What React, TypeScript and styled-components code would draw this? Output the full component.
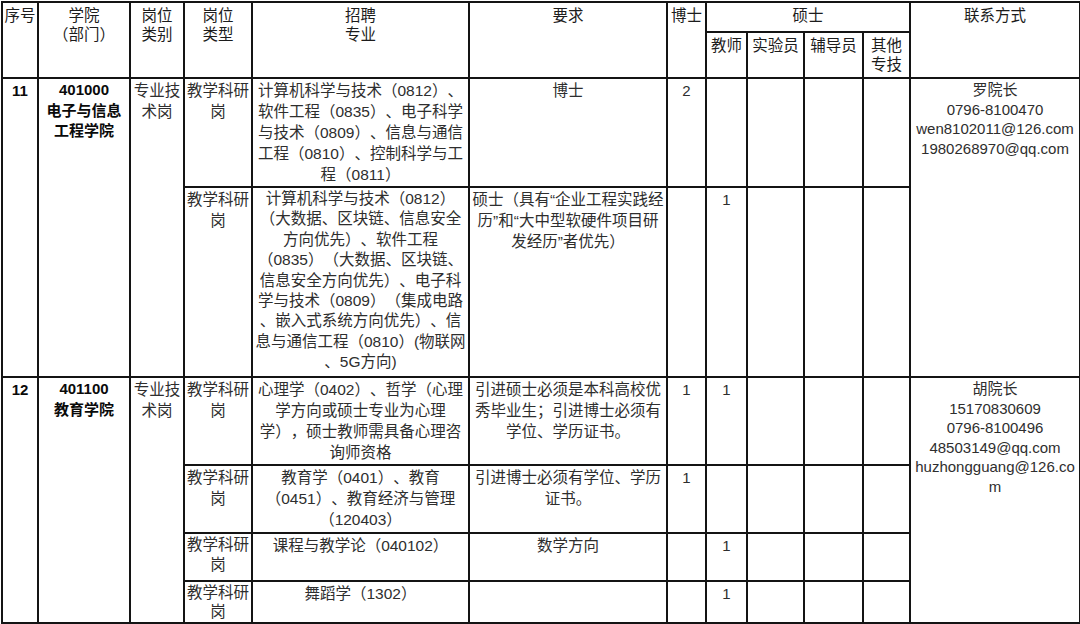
import styled, { createGlobalStyle } from "styled-components";

const GlobalStyle = createGlobalStyle`
  html, body {
    margin: 0;
    padding: 0;
    background: #ffffff;
  }
  body {
    font-family: "Liberation Sans", "Noto Sans CJK SC", sans-serif;
    font-size: 15.5px;
    color: #222;
    text-spacing-trim: space-all;
  }
`;

// column widths, measured from the grid lines of the sheet
const widths = [36, 92, 54, 68, 217, 198, 39, 41, 57, 59, 47, 170];

const Sheet = styled.table`
  border-collapse: collapse;
  table-layout: fixed;
  width: 1078px;
  margin: 1px 0 0 1px;
`;

const Row = styled.tr<{ $h: number }>`
  height: ${(p) => p.$h}px;
`;

const HeadCell = styled.th`
  border: 2px solid #141414;
  vertical-align: top;
  text-align: center;
  font-weight: 400;
  color: #1c1c1c;
  padding: 3px 0 0;
  line-height: 19px;
  white-space: nowrap;
  overflow: hidden;
`;

const Cell = styled.td<{ $bold?: boolean; $lh?: number; $pad?: number; $size?: number }>`
  border: 2px solid #141414;
  vertical-align: top;
  text-align: center;
  padding: ${(p) => p.$pad ?? 1}px 1px 0;
  font-size: ${(p) => p.$size ?? 15.5}px;
  font-weight: ${(p) => (p.$bold ? 700 : 400)};
  color: ${(p) => (p.$bold ? "#0a0a0a" : "#2e2e2e")};
  line-height: ${(p) => p.$lh ?? 21}px;
  white-space: nowrap;
  overflow: hidden;
`;

const Line = styled.span`
  display: block;
`;

function Lines({ items }: { items: string[] }) {
  return (
    <>
      {items.map((t, i) => (
        <Line key={i}>{t}</Line>
      ))}
    </>
  );
}

function Empty({ n }: { n: number }) {
  return (
    <>
      {Array.from({ length: n }).map((_, i) => (
        <Cell key={i} />
      ))}
    </>
  );
}

const postType = ["教学科研", "岗"];
const postCat = ["专业技", "术岗"];

export default function App() {
  return (
    <>
      <GlobalStyle />
      <Sheet>
        <colgroup>
          {widths.map((w, i) => (
            <col key={i} style={{ width: w }} />
          ))}
        </colgroup>
        <thead>
          <Row $h={30}>
            <HeadCell rowSpan={2}>序号</HeadCell>
            <HeadCell rowSpan={2}>
              <Lines items={["学院", "（部门）"]} />
            </HeadCell>
            <HeadCell rowSpan={2}>
              <Lines items={["岗位", "类别"]} />
            </HeadCell>
            <HeadCell rowSpan={2}>
              <Lines items={["岗位", "类型"]} />
            </HeadCell>
            <HeadCell rowSpan={2}>
              <Lines items={["招聘", "专业"]} />
            </HeadCell>
            <HeadCell rowSpan={2}>要求</HeadCell>
            <HeadCell rowSpan={2}>博士</HeadCell>
            <HeadCell colSpan={4}>硕士</HeadCell>
            <HeadCell rowSpan={2}>联系方式</HeadCell>
          </Row>
          <Row $h={46}>
            <HeadCell>教师</HeadCell>
            <HeadCell>实验员</HeadCell>
            <HeadCell>辅导员</HeadCell>
            <HeadCell>
              <Lines items={["其他", "专技"]} />
            </HeadCell>
          </Row>
        </thead>
        <tbody>
          <Row $h={109}>
            <Cell rowSpan={2} $bold $size={15}>11</Cell>
            <Cell rowSpan={2} $bold $lh={20.5} $size={15}>
              <Lines items={["401000", "电子与信息", "工程学院"]} />
            </Cell>
            <Cell rowSpan={2}>
              <Lines items={postCat} />
            </Cell>
            <Cell>
              <Lines items={postType} />
            </Cell>
            <Cell $lh={21}>
              <Lines
                items={[
                  "计算机科学与技术（0812）、",
                  "软件工程（0835）、电子科学",
                  "与技术（0809）、信息与通信",
                  "工程（0810）、控制科学与工",
                  "程（0811）",
                ]}
              />
            </Cell>
            <Cell>博士</Cell>
            <Cell $size={15}>2</Cell>
            <Empty n={4} />
            <Cell rowSpan={2} $lh={19.5} $size={15}>
              <Lines
                items={["罗院长", "0796-8100470", "wen8102011@126.com", "1980268970@qq.com"]}
              />
            </Cell>
          </Row>
          <Row $h={190}>
            <Cell>
              <Lines items={postType} />
            </Cell>
            <Cell $lh={20.4}>
              <Lines
                items={[
                  "计算机科学与技术（0812）",
                  "（大数据、区块链、信息安全",
                  "方向优先）、软件工程",
                  "（0835）（大数据、区块链、",
                  "信息安全方向优先）、电子科",
                  "学与技术（0809）（集成电路",
                  "、嵌入式系统方向优先）、信",
                  "息与通信工程（0810）(物联网",
                  "、5G方向)",
                ]}
              />
            </Cell>
            <Cell>
              <Lines
                items={[
                  "硕士（具有“企业工程实践经",
                  "历”和“大中型软硬件项目研",
                  "发经历”者优先）",
                ]}
              />
            </Cell>
            <Cell />
            <Cell $size={15}>1</Cell>
            <Empty n={3} />
          </Row>
          <Row $h={88}>
            <Cell rowSpan={4} $bold $size={15}>12</Cell>
            <Cell rowSpan={4} $bold $lh={20.5} $size={15}>
              <Lines items={["401100", "教育学院"]} />
            </Cell>
            <Cell rowSpan={4}>
              <Lines items={postCat} />
            </Cell>
            <Cell>
              <Lines items={postType} />
            </Cell>
            <Cell>
              <Lines
                items={[
                  "心理学（0402）、哲学（心理",
                  "学方向或硕士专业为心理",
                  "学），硕士教师需具备心理咨",
                  "询师资格",
                ]}
              />
            </Cell>
            <Cell>
              <Lines
                items={[
                  "引进硕士必须是本科高校优",
                  "秀毕业生；引进博士必须有",
                  "学位、学历证书。",
                ]}
              />
            </Cell>
            <Cell $size={15}>1</Cell>
            <Cell $size={15}>1</Cell>
            <Empty n={3} />
            <Cell rowSpan={4} $lh={19.5} $size={15}>
              <Lines
                items={[
                  "胡院长",
                  "15170830609",
                  "0796-8100496",
                  "48503149@qq.com",
                  "huzhongguang@126.co",
                  "m",
                ]}
              />
            </Cell>
          </Row>
          <Row $h={68}>
            <Cell>
              <Lines items={postType} />
            </Cell>
            <Cell>
              <Lines items={["教育学（0401）、教育", "（0451）、教育经济与管理", "（120403）"]} />
            </Cell>
            <Cell>
              <Lines items={["引进博士必须有学位、学历", "证书。"]} />
            </Cell>
            <Cell $size={15}>1</Cell>
            <Empty n={4} />
          </Row>
          <Row $h={48}>
            <Cell $lh={20}>
              <Lines items={postType} />
            </Cell>
            <Cell>课程与教学论（040102）</Cell>
            <Cell>数学方向</Cell>
            <Cell />
            <Cell $size={15}>1</Cell>
            <Empty n={3} />
          </Row>
          <Row $h={42}>
            <Cell $lh={19}>
              <Lines items={postType} />
            </Cell>
            <Cell>舞蹈学（1302）</Cell>
            <Cell />
            <Cell />
            <Cell $size={15}>1</Cell>
            <Empty n={3} />
          </Row>
        </tbody>
      </Sheet>
    </>
  );
}
